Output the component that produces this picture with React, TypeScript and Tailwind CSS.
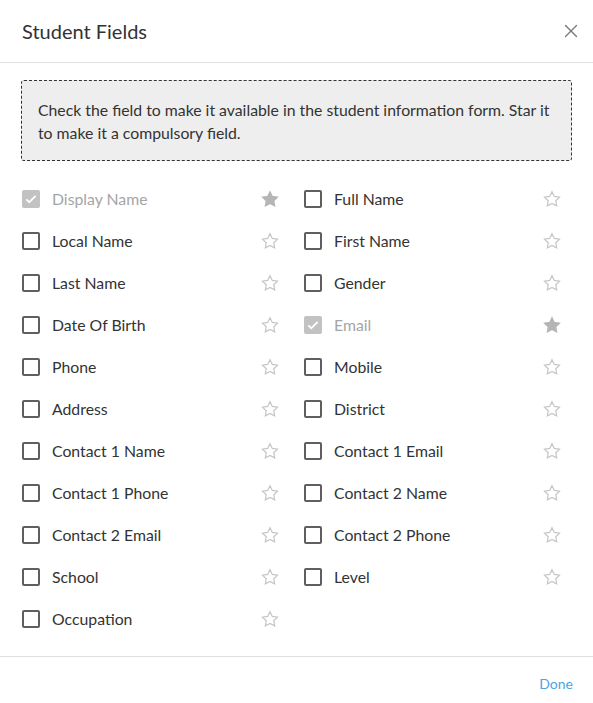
import { X } from "lucide-react";

type Field = { name: string; checked?: boolean; starred?: boolean; locked?: boolean };

const fields: Field[] = [
  { name: "Display Name", checked: true, starred: true, locked: true },
  { name: "Full Name" },
  { name: "Local Name" },
  { name: "First Name" },
  { name: "Last Name" },
  { name: "Gender" },
  { name: "Date Of Birth" },
  { name: "Email", checked: true, starred: true, locked: true },
  { name: "Phone" },
  { name: "Mobile" },
  { name: "Address" },
  { name: "District" },
  { name: "Contact 1 Name" },
  { name: "Contact 1 Email" },
  { name: "Contact 1 Phone" },
  { name: "Contact 2 Name" },
  { name: "Contact 2 Email" },
  { name: "Contact 2 Phone" },
  { name: "School" },
  { name: "Level" },
  { name: "Occupation" },
];

function StarIcon({ filled }: { filled?: boolean }) {
  return (
    <svg width="18" height="18" viewBox="0 0 24 24" className="shrink-0">
      <polygon
        points="12,2.2 15.1,8.6 22,9.5 17,14.3 18.2,21.2 12,17.9 5.8,21.2 7,14.3 2,9.5 8.9,8.6"
        fill={filled ? "#b5b5b5" : "none"}
        stroke={filled ? "#b5b5b5" : "#c6c6c6"}
        strokeWidth="1.6"
        strokeLinejoin="miter"
      />
    </svg>
  );
}

function Checkbox({ checked, locked }: { checked?: boolean; locked?: boolean }) {
  if (checked) {
    return (
      <span
        className={`flex h-[18px] w-[18px] shrink-0 items-center justify-center rounded-[2px] ${
          locked ? "bg-[#c2c2c2]" : "bg-[#333]"
        }`}
      >
        <svg width="14" height="14" viewBox="0 0 24 24">
          <path d="M4 12.5l5 5L20 6.5" fill="none" stroke="#fff" strokeWidth="3" />
        </svg>
      </span>
    );
  }
  return <span className="h-[18px] w-[18px] shrink-0 rounded-[2px] border-2 border-[#5f5f5f]" />;
}

export default function App() {
  return (
    <div className="h-[703px] w-[593px] bg-white font-['Lato','Open_Sans',sans-serif] text-[#333]">
      <div className="flex h-[63px] items-center justify-between border-b border-[#e0e0e0] pl-[22px] pr-[11px]">
        <h2 className="text-[20px] leading-none text-[#333]">Student Fields</h2>
        <X size={22} strokeWidth={1.5} color="#7a7a7a" />
      </div>
      <div className="px-[21px] pb-[16px] pt-[17px]">
        <div className="rounded-[3px] border border-dashed border-[#333] bg-[#eeeeee] pb-[16px] pl-[16px] pr-[16px] pt-[17px] text-[15.8px] leading-[23px] text-[#333]">
          Check the field to make it available in the student information form. Star it to make it a compulsory field.
        </div>
        <div className="mt-[17px] grid w-[540px] grid-cols-2 gap-x-[25px] pl-px">
          {fields.map((f) => (
            <div key={f.name} className="flex h-[42px] items-center">
              <Checkbox checked={f.checked} locked={f.locked} />
              <span className={`ml-[12px] flex-1 text-[15.8px] ${f.locked ? "text-[#a5a5a5]" : "text-[#333]"}`}>
                {f.name}
              </span>
              <StarIcon filled={f.starred} />
            </div>
          ))}
        </div>
      </div>
      <div className="flex h-[47px] items-center justify-end border-t border-[#e0e0e0] pr-[20px] pt-[6px]">
        <button className="text-[14px] text-[#4aa5e0]">Done</button>
      </div>
    </div>
  );
}
